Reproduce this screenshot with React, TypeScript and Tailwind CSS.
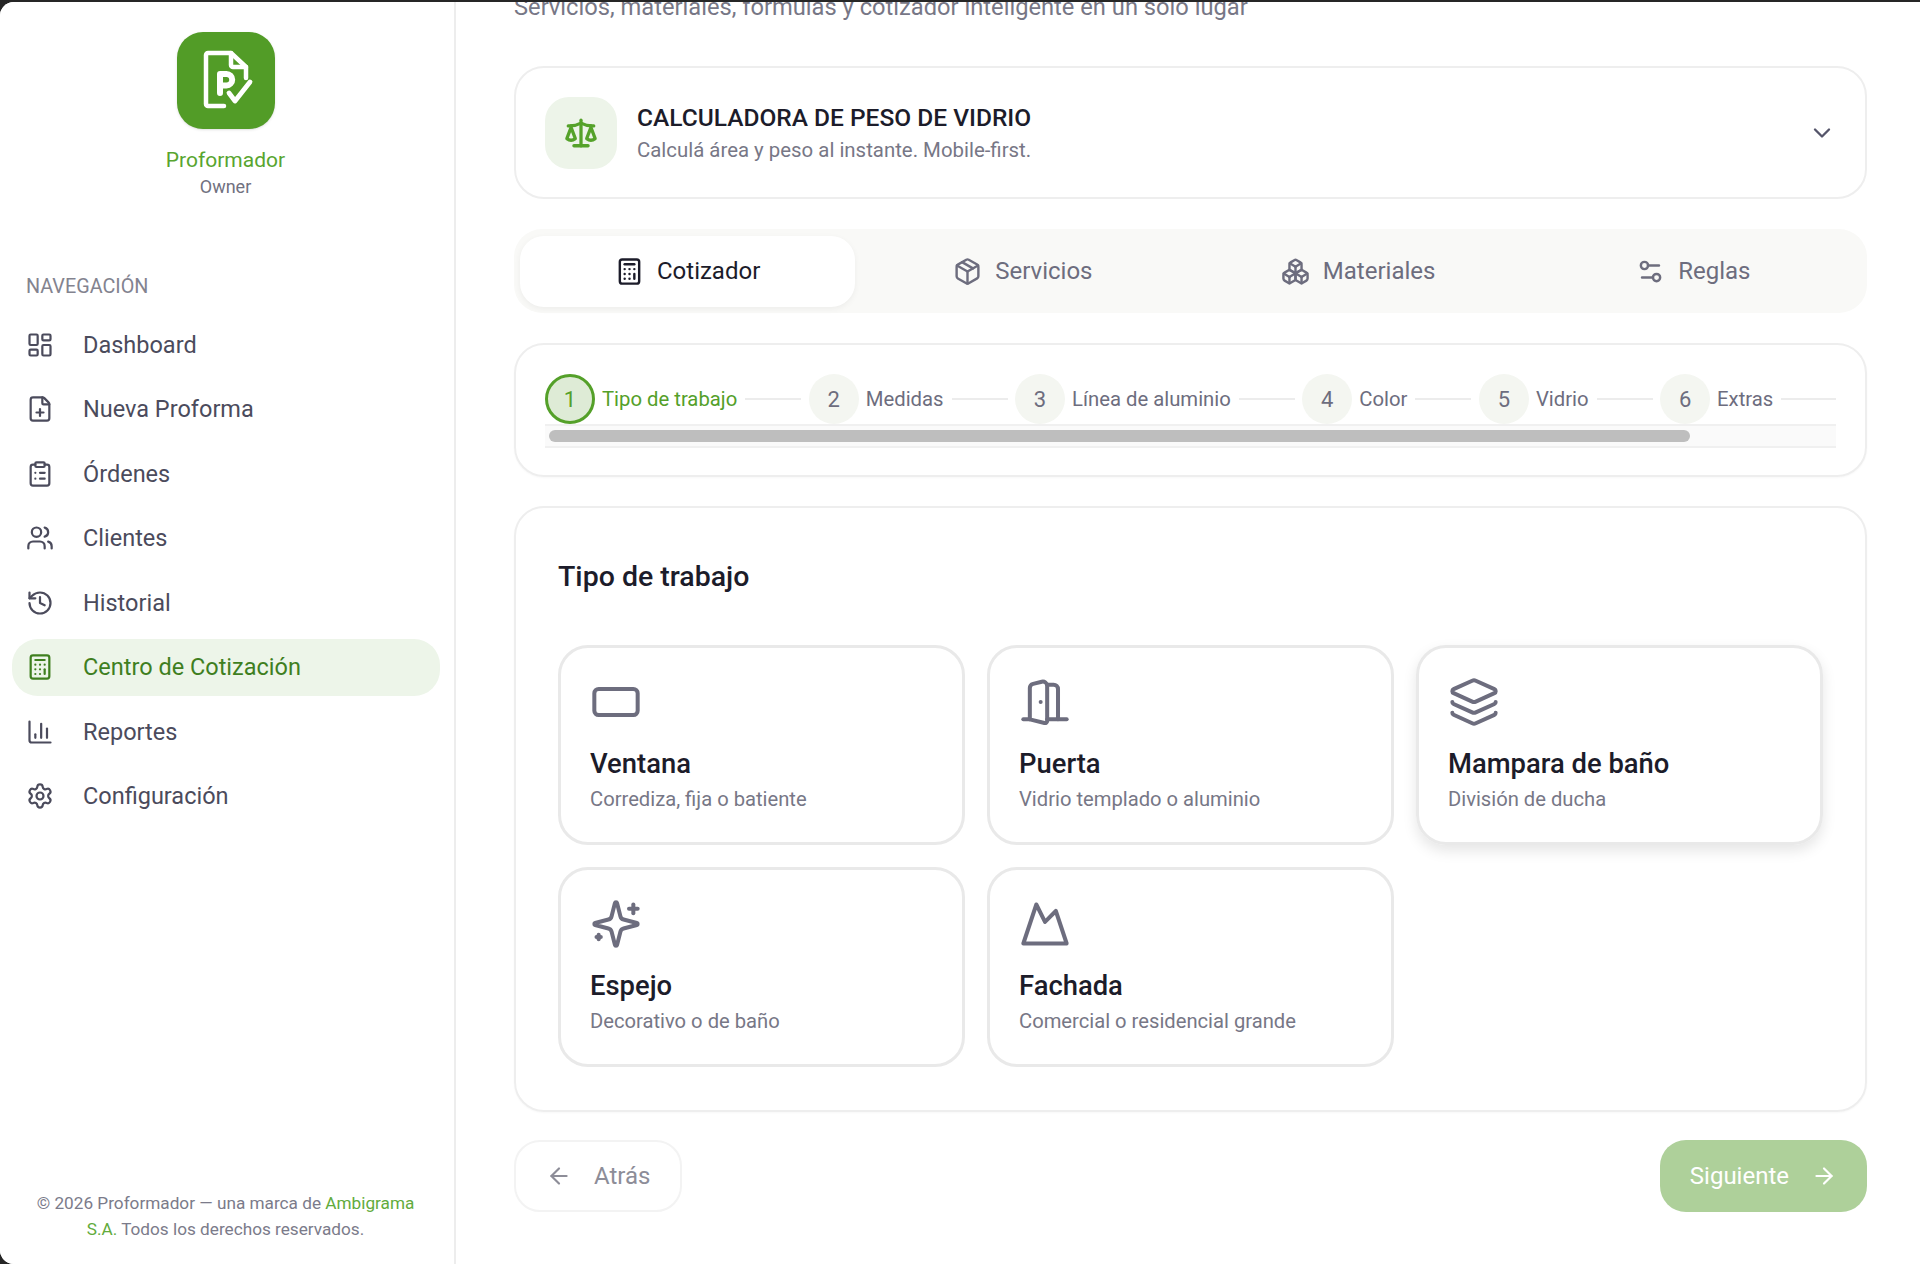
import {
  ArrowLeft,
  ArrowRight,
  Boxes,
  Calculator,
  ChartColumn,
  ChevronDown,
  ClipboardList,
  FilePlus,
  History,
  Layers,
  LayoutDashboard,
  Mountain,
  Package,
  RectangleHorizontal,
  Scale,
  Settings,
  Settings2,
  Users,
} from "lucide-react";

const FONT = "font-['Roboto','Noto_Sans',sans-serif]";

const NAV = [
  { label: "Dashboard", icon: LayoutDashboard },
  { label: "Nueva Proforma", icon: FilePlus },
  { label: "Órdenes", icon: ClipboardList },
  { label: "Clientes", icon: Users },
  { label: "Historial", icon: History },
  { label: "Centro de Cotización", icon: Calculator, active: true },
  { label: "Reportes", icon: ChartColumn },
  { label: "Configuración", icon: Settings },
];

const TABS = [
  { label: "Cotizador", icon: Calculator, active: true },
  { label: "Servicios", icon: Package },
  { label: "Materiales", icon: Boxes },
  { label: "Reglas", icon: Settings2 },
];

const STEPS = [
  { n: 1, label: "Tipo de trabajo", active: true },
  { n: 2, label: "Medidas" },
  { n: 3, label: "Línea de aluminio" },
  { n: 4, label: "Color" },
  { n: 5, label: "Vidrio" },
  { n: 6, label: "Extras" },
];

interface GlyphProps {
  size?: number;
  strokeWidth?: number;
  className?: string;
}

// older lucide door-open: leaf on the left, frame on the right
function DoorGlyph({ size = 24, strokeWidth = 2, className }: GlyphProps) {
  return (
    <svg width={size} height={size} viewBox="0 0 24 24" fill="none" stroke="currentColor" strokeWidth={strokeWidth} strokeLinecap="round" strokeLinejoin="round" className={className}>
      <path d="M13 4h3a2 2 0 0 1 2 2v14" />
      <path d="M2 20h3" />
      <path d="M13 20h9" />
      <path d="M10 12v.01" />
      <path d="M13 4.562v16.157a1 1 0 0 1-1.242.97L5 20V5.562a2 2 0 0 1 1.515-1.94l4-1A2 2 0 0 1 13 4.561Z" />
    </svg>
  );
}

// older lucide sparkles: plus marks instead of the little circle
function SparklesGlyph({ size = 24, strokeWidth = 2, className }: GlyphProps) {
  return (
    <svg width={size} height={size} viewBox="0 0 24 24" fill="none" stroke="currentColor" strokeWidth={strokeWidth} strokeLinecap="round" strokeLinejoin="round" className={className}>
      <path d="M9.937 15.5A2 2 0 0 0 8.5 14.063l-6.135-1.582a.5.5 0 0 1 0-.962L8.5 9.936A2 2 0 0 0 9.937 8.5l1.582-6.135a.5.5 0 0 1 .963 0L14.063 8.5A2 2 0 0 0 15.5 9.937l6.135 1.581a.5.5 0 0 1 0 .964L15.5 14.063a2 2 0 0 0-1.437 1.437l-1.582 6.135a.5.5 0 0 1-.963 0z" />
      <path d="M20 3v4" />
      <path d="M22 5h-4" />
      <path d="M4 17v2" />
      <path d="M5 18H3" />
    </svg>
  );
}

const JOBS = [
  { title: "Ventana", desc: "Corrediza, fija o batiente", icon: RectangleHorizontal },
  { title: "Puerta", desc: "Vidrio templado o aluminio", icon: DoorGlyph },
  { title: "Mampara de baño", desc: "División de ducha", icon: Layers, hover: true },
  { title: "Espejo", desc: "Decorativo o de baño", icon: SparklesGlyph },
  { title: "Fachada", desc: "Comercial o residencial grande", icon: Mountain },
];

function Logo() {
  return (
    <div className="h-[97px] w-[98px] rounded-[26px] bg-[#529c27] shadow-sm">
      <svg viewBox="0 0 98 97" className="h-[97px] w-[98px]" fill="none" stroke="white" strokeWidth="4.5" strokeLinejoin="round" strokeLinecap="round">
        <path d="M47 74H31a2 2 0 0 1-2-2V23a2 2 0 0 1 2-2H54L69 35V46" />
        <path d="M54 21V33a2 2 0 0 0 2 2H69" />
        <path d="M43 61V42H49.5a5.7 5.7 0 0 1 0 11.4H43" strokeWidth="6" />
        <path d="M52 61l6 8 15-19" strokeWidth="4.8" />
      </svg>
    </div>
  );
}

function Sidebar() {
  return (
    <aside className="flex h-full w-[456px] shrink-0 flex-col border-r-2 border-[#ededed] bg-white">
      <div className="flex flex-col items-center pt-[30px] pr-[3px]">
        <Logo />
        <div className="mt-[17px] text-[21px] leading-[28px] text-[#58a52f]">Proformador</div>
        <div className="mt-[1px] text-[18px] leading-[24px] text-[#71717f]">Owner</div>
      </div>
      <div className="mt-[74px] px-[26px] text-[19.8px] leading-[28px] text-[#83838f]">NAVEGACIÓN</div>
      <nav className="mt-[15px] flex flex-col gap-[7.5px] pr-[14px] pl-[12px]">
        {NAV.map((item) => (
          <div
            key={item.label}
            className={`flex h-[57px] items-center gap-[29px] rounded-[26px] pl-[14px] text-[23.5px] ${
              item.active ? "bg-[#edf5e9] text-[#3f7f1f]" : "text-[#4b4b5c]"
            }`}
          >
            <item.icon size={28} strokeWidth={1.9} />
            <span className="pt-[2px]">{item.label}</span>
          </div>
        ))}
      </nav>
      <p className="mt-auto mb-[22px] pr-[33px] pl-[30px] text-center text-[17.2px] leading-[26px] text-[#7b7b8a]">
        © 2026 Proformador — una marca de <span className="text-[#62ab3c]">Ambigrama S.A.</span> Todos los derechos reservados.
      </p>
    </aside>
  );
}

function CalculatorCard() {
  return (
    <div className="mt-[42px] flex h-[133px] items-center rounded-[30px] border-2 border-[#eeeeee] pr-[29px] pl-[29px]">
      <div className="flex h-[72px] w-[72px] items-center justify-center rounded-[24px] bg-[#edf4e9] pr-[1px] text-[#55a22a]">
        <Scale size={34} strokeWidth={2.3} />
      </div>
      <div className="ml-[20px] flex-1 pt-[4px]">
        <div className="text-[24.5px] leading-[32px] font-medium text-[#1c1c2a]">CALCULADORA DE PESO DE VIDRIO</div>
        <div className="text-[20.4px] leading-[33px] text-[#777786]">Calculá área y peso al instante. Mobile-first.</div>
      </div>
      <ChevronDown size={28} strokeWidth={2} className="text-[#55556a]" />
    </div>
  );
}

function Tabs() {
  return (
    <div className="mt-[30px] grid h-[84px] grid-cols-4 items-center rounded-[28px] bg-[#f9f9f7] px-[6px]">
      {TABS.map((tab) => (
        <div
          key={tab.label}
          className={`flex h-[71px] items-center justify-center gap-[13px] rounded-[24px] text-[24px] ${
            tab.active ? "bg-white text-[#1c1c2a] shadow-[0_2px_6px_rgba(0,0,0,0.05)]" : "text-[#6d6d7e]"
          }`}
        >
          <tab.icon size={29} strokeWidth={2} />
          <span>{tab.label}</span>
        </div>
      ))}
    </div>
  );
}

function Stepper() {
  return (
    <div className="mt-[30px] h-[134px] rounded-[30px] border-2 border-[#eeeeee] px-[29px] pt-[29px] shadow-[0_1px_2px_rgba(0,0,0,0.03)]">
      <div className="flex items-center overflow-hidden">
        {STEPS.map((step) => (
          <div key={step.n} className="flex shrink-0 items-center gap-[7px] pr-[7.5px]">
            <div
              className={`flex h-[50px] w-[50px] items-center justify-center rounded-full text-[22px] ${
                step.active
                  ? "border-[3px] border-[#54a029] bg-[#deebd6] text-[#54a029]"
                  : "bg-[#f4f6f1] text-[#6d6d7e]"
              }`}
            >
              {step.n}
            </div>
            <span className={`text-[20.3px] ${step.active ? "text-[#54a029]" : "text-[#6d6d7e]"}`}>{step.label}</span>
            <div className="ml-[1px] h-[2px] w-[56px] bg-[#ececec]" />
          </div>
        ))}
      </div>
      <div className="flex h-[24px] items-center border-y-2 border-[#f0f0f0] bg-[#fafafa] px-[4px]">
        <div className="h-[12px] w-[1141px] rounded-full bg-[#bebebe]" />
      </div>
    </div>
  );
}

function JobGrid() {
  return (
    <div className="mt-[29px] h-[606px] rounded-[30px] border-2 border-[#eeeeee] px-[42px] pt-[47px] shadow-[0_1px_2px_rgba(0,0,0,0.03)]">
      <h2 className="text-[28.5px] leading-[44px] font-medium text-[#1c1c2a]">Tipo de trabajo</h2>
      <div className="mt-[46px] grid grid-cols-3 gap-[22px]">
        {JOBS.map((job) => (
          <div
            key={job.title}
            className={`h-[200px] rounded-[30px] border-[3px] border-[#e9e9e9] px-[29px] pt-[28px] ${
              job.hover ? "shadow-[0_6px_14px_rgba(0,0,0,0.10)]" : ""
            }`}
          >
            <job.icon size={52} strokeWidth={1.85} className="text-[#6d6d7e]" />
            <div className="mt-[18px] text-[27.4px] leading-[36px] font-medium text-[#1c1c2a]">{job.title}</div>
            <div className="mt-[2px] text-[20.2px] leading-[30px] text-[#777786]">{job.desc}</div>
          </div>
        ))}
      </div>
    </div>
  );
}

function Footer() {
  return (
    <div className="mt-[28px] flex items-start justify-between">
      <div className="flex h-[72px] items-center gap-[22px] rounded-[26px] border-2 border-[#f3f3f3] px-[30px] text-[24px] text-[#8d8d98]">
        <ArrowLeft size={26} strokeWidth={2} />
        <span>Atrás</span>
      </div>
      <div className="flex h-[72px] items-center gap-[22px] rounded-[26px] bg-[#aed09a] px-[30px] text-[24px] text-white">
        <span>Siguiente</span>
        <ArrowRight size={26} strokeWidth={2} />
      </div>
    </div>
  );
}

export default function App() {
  return (
    <div className={`h-[1264px] w-[1920px] overflow-hidden bg-[#262626] pt-[2px] ${FONT}`}>
      <div className="flex h-[1262px] overflow-hidden rounded-l-[14px] bg-white">
        <Sidebar />
        <main className="flex-1 pr-[53px] pl-[58px]">
          <p className="-mt-[12px] text-[23.7px] leading-[34px] text-[#777786]">
            Servicios, materiales, fórmulas y cotizador inteligente en un solo lugar
          </p>
          <CalculatorCard />
          <Tabs />
          <Stepper />
          <JobGrid />
          <Footer />
        </main>
      </div>
    </div>
  );
}
